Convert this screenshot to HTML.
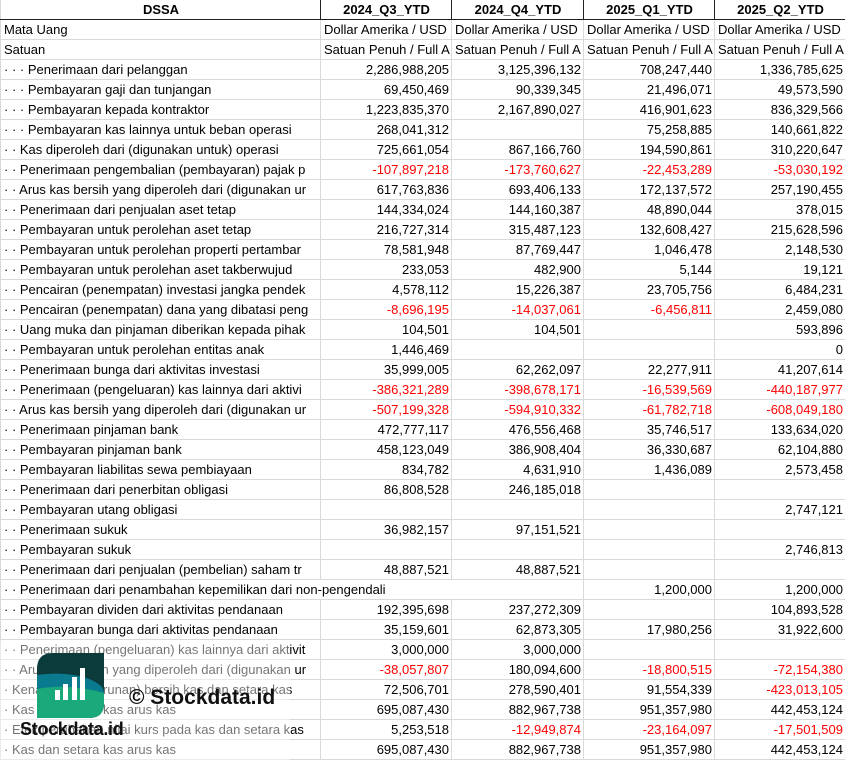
<!DOCTYPE html>
<html><head><meta charset="utf-8"><style>
html,body{margin:0;padding:0;background:#fff;}
body{width:845px;height:761px;overflow:hidden;position:relative;font-family:"Liberation Sans",Arial,sans-serif;font-size:13px;color:#000;}
table{border-collapse:collapse;table-layout:fixed;position:absolute;left:0;top:0;width:845px;}
td{height:19px;padding:0 2px 0 3px;border:1px solid #d9d9d9;white-space:nowrap;overflow:hidden;line-height:19px;box-sizing:border-box;}
td.n{text-align:right;}
tr.h td{font-weight:bold;text-align:center;border-bottom:1px solid #222;border-right:1px solid #222;border-top:none;}
.r{color:#f00;}
</style></head><body>
<table>
<colgroup><col style="width:320px"><col style="width:131px"><col style="width:132px"><col style="width:131px"><col style="width:131px"></colgroup>
<tr class="h"><td>DSSA</td><td>2024_Q3_YTD</td><td>2024_Q4_YTD</td><td>2025_Q1_YTD</td><td>2025_Q2_YTD</td></tr>
<tr><td>Mata Uang</td><td>Dollar Amerika / USD</td><td>Dollar Amerika / USD</td><td>Dollar Amerika / USD</td><td>Dollar Amerika / USD</td></tr>
<tr><td>Satuan</td><td>Satuan Penuh / Full A</td><td>Satuan Penuh / Full A</td><td>Satuan Penuh / Full A</td><td>Satuan Penuh / Full A</td></tr>
<tr><td>· · · Penerimaan dari pelanggan</td><td class="n">2,286,988,205</td><td class="n">3,125,396,132</td><td class="n">708,247,440</td><td class="n">1,336,785,625</td></tr>
<tr><td>· · · Pembayaran gaji dan tunjangan</td><td class="n">69,450,469</td><td class="n">90,339,345</td><td class="n">21,496,071</td><td class="n">49,573,590</td></tr>
<tr><td>· · · Pembayaran kepada kontraktor</td><td class="n">1,223,835,370</td><td class="n">2,167,890,027</td><td class="n">416,901,623</td><td class="n">836,329,566</td></tr>
<tr><td>· · · Pembayaran kas lainnya untuk beban operasi</td><td class="n">268,041,312</td><td class="n"></td><td class="n">75,258,885</td><td class="n">140,661,822</td></tr>
<tr><td>· · Kas diperoleh dari (digunakan untuk) operasi</td><td class="n">725,661,054</td><td class="n">867,166,760</td><td class="n">194,590,861</td><td class="n">310,220,647</td></tr>
<tr><td>· · Penerimaan pengembalian (pembayaran) pajak p</td><td class="n r">-107,897,218</td><td class="n r">-173,760,627</td><td class="n r">-22,453,289</td><td class="n r">-53,030,192</td></tr>
<tr><td>· · Arus kas bersih yang diperoleh dari (digunakan ur</td><td class="n">617,763,836</td><td class="n">693,406,133</td><td class="n">172,137,572</td><td class="n">257,190,455</td></tr>
<tr><td>· · Penerimaan dari penjualan aset tetap</td><td class="n">144,334,024</td><td class="n">144,160,387</td><td class="n">48,890,044</td><td class="n">378,015</td></tr>
<tr><td>· · Pembayaran untuk perolehan aset tetap</td><td class="n">216,727,314</td><td class="n">315,487,123</td><td class="n">132,608,427</td><td class="n">215,628,596</td></tr>
<tr><td>· · Pembayaran untuk perolehan properti pertambar</td><td class="n">78,581,948</td><td class="n">87,769,447</td><td class="n">1,046,478</td><td class="n">2,148,530</td></tr>
<tr><td>· · Pembayaran untuk perolehan aset takberwujud</td><td class="n">233,053</td><td class="n">482,900</td><td class="n">5,144</td><td class="n">19,121</td></tr>
<tr><td>· · Pencairan (penempatan) investasi jangka pendek</td><td class="n">4,578,112</td><td class="n">15,226,387</td><td class="n">23,705,756</td><td class="n">6,484,231</td></tr>
<tr><td>· · Pencairan (penempatan) dana yang dibatasi peng</td><td class="n r">-8,696,195</td><td class="n r">-14,037,061</td><td class="n r">-6,456,811</td><td class="n">2,459,080</td></tr>
<tr><td>· · Uang muka dan pinjaman diberikan kepada pihak</td><td class="n">104,501</td><td class="n">104,501</td><td class="n"></td><td class="n">593,896</td></tr>
<tr><td>· · Pembayaran untuk perolehan entitas anak</td><td class="n">1,446,469</td><td class="n"></td><td class="n"></td><td class="n">0</td></tr>
<tr><td>· · Penerimaan bunga dari aktivitas investasi</td><td class="n">35,999,005</td><td class="n">62,262,097</td><td class="n">22,277,911</td><td class="n">41,207,614</td></tr>
<tr><td>· · Penerimaan (pengeluaran) kas lainnya dari aktivi</td><td class="n r">-386,321,289</td><td class="n r">-398,678,171</td><td class="n r">-16,539,569</td><td class="n r">-440,187,977</td></tr>
<tr><td>· · Arus kas bersih yang diperoleh dari (digunakan ur</td><td class="n r">-507,199,328</td><td class="n r">-594,910,332</td><td class="n r">-61,782,718</td><td class="n r">-608,049,180</td></tr>
<tr><td>· · Penerimaan pinjaman bank</td><td class="n">472,777,117</td><td class="n">476,556,468</td><td class="n">35,746,517</td><td class="n">133,634,020</td></tr>
<tr><td>· · Pembayaran pinjaman bank</td><td class="n">458,123,049</td><td class="n">386,908,404</td><td class="n">36,330,687</td><td class="n">62,104,880</td></tr>
<tr><td>· · Pembayaran liabilitas sewa pembiayaan</td><td class="n">834,782</td><td class="n">4,631,910</td><td class="n">1,436,089</td><td class="n">2,573,458</td></tr>
<tr><td>· · Penerimaan dari penerbitan obligasi</td><td class="n">86,808,528</td><td class="n">246,185,018</td><td class="n"></td><td class="n"></td></tr>
<tr><td>· · Pembayaran utang obligasi</td><td class="n"></td><td class="n"></td><td class="n"></td><td class="n">2,747,121</td></tr>
<tr><td>· · Penerimaan sukuk</td><td class="n">36,982,157</td><td class="n">97,151,521</td><td class="n"></td><td class="n"></td></tr>
<tr><td>· · Pembayaran sukuk</td><td class="n"></td><td class="n"></td><td class="n"></td><td class="n">2,746,813</td></tr>
<tr><td>· · Penerimaan dari penjualan (pembelian) saham tr</td><td class="n">48,887,521</td><td class="n">48,887,521</td><td class="n"></td><td class="n"></td></tr>
<tr><td colspan="3">· · Penerimaan dari penambahan kepemilikan dari non-pengendali</td><td class="n">1,200,000</td><td class="n">1,200,000</td></tr>
<tr><td>· · Pembayaran dividen dari aktivitas pendanaan</td><td class="n">192,395,698</td><td class="n">237,272,309</td><td class="n"></td><td class="n">104,893,528</td></tr>
<tr><td>· · Pembayaran bunga dari aktivitas pendanaan</td><td class="n">35,159,601</td><td class="n">62,873,305</td><td class="n">17,980,256</td><td class="n">31,922,600</td></tr>
<tr><td>· · Penerimaan (pengeluaran) kas lainnya dari aktivit</td><td class="n">3,000,000</td><td class="n">3,000,000</td><td class="n"></td><td class="n"></td></tr>
<tr><td>· · Arus kas bersih yang diperoleh dari (digunakan ur</td><td class="n r">-38,057,807</td><td class="n">180,094,600</td><td class="n r">-18,800,515</td><td class="n r">-72,154,380</td></tr>
<tr><td>· Kenaikan (penurunan) bersih kas dan setara kas</td><td class="n">72,506,701</td><td class="n">278,590,401</td><td class="n">91,554,339</td><td class="n r">-423,013,105</td></tr>
<tr><td>· Kas dan setara kas arus kas</td><td class="n">695,087,430</td><td class="n">882,967,738</td><td class="n">951,357,980</td><td class="n">442,453,124</td></tr>
<tr><td>· Efek perubahan nilai kurs pada kas dan setara kas</td><td class="n">5,253,518</td><td class="n r">-12,949,874</td><td class="n r">-23,164,097</td><td class="n r">-17,501,509</td></tr>
<tr><td>· Kas dan setara kas arus kas</td><td class="n">695,087,430</td><td class="n">882,967,738</td><td class="n">951,357,980</td><td class="n">442,453,124</td></tr>
</table>
<div style="position:absolute;left:0;top:641px;width:290px;height:120px;background:rgba(255,255,255,0.45);"></div>
<svg style="position:absolute;left:37px;top:653px" width="67" height="65" viewBox="0 0 67 65">
<defs><clipPath id="c"><path d="M16 0H67V50Q67 65 52 65H0V16Q0 0 16 0Z"/></clipPath></defs>
<g clip-path="url(#c)">
<rect width="67" height="65" fill="#0c3b3c"/>
<path d="M0 22Q30 18 52 26Q67 32 67 40V65H0Z" fill="#0a7b8e"/>
<path d="M0 36Q30 30 67 40V65H0Z" fill="#1aa97a"/>
</g>
<rect x="18" y="37" width="5" height="10" fill="#fff"/>
<rect x="26" y="31" width="5" height="16" fill="#fff"/>
<rect x="35" y="24" width="5" height="23" fill="#fff"/>
<rect x="43" y="15" width="5" height="32" fill="#fff"/>
</svg>
<div style="position:absolute;left:20px;top:719px;font-weight:bold;font-size:18px;color:#111;letter-spacing:-0.3px;">Stockdata.id</div>
<div style="position:absolute;left:129px;top:686px;font-weight:bold;font-size:21px;color:#111;">© Stockdata.id</div>
</body></html>
